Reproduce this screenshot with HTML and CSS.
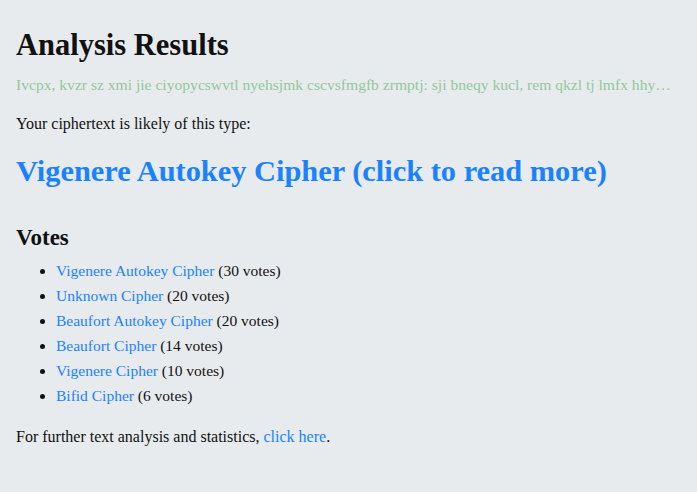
FILE: index.html
```html
<!DOCTYPE html>
<html>
<head>
<meta charset="utf-8">
<link rel="stylesheet" href="styles.css">
</head>
<body>
<main class="page">
  <h1 class="title">Analysis Results</h1>
  <p class="sample">Ivcpx, kvzr sz xmi jie ciyopycswvtl nyehsjmk cscvsfmgfb zrmptj: sji bneqy kucl, rem qkzl tj lmfx hhy…</p>
  <p class="text">Your ciphertext is likely of this type:</p>
  <h2 class="result"><a href="#">Vigenere Autokey Cipher (click to read more)</a></h2>
  <h3 class="votes-title">Votes</h3>
  <ul class="votes">
    <li><a href="#">Vigenere Autokey Cipher</a> (30 votes)</li>
    <li><a href="#">Unknown Cipher</a> (20 votes)</li>
    <li><a href="#">Beaufort Autokey Cipher</a> (20 votes)</li>
    <li><a href="#">Beaufort Cipher</a> (14 votes)</li>
    <li><a href="#">Vigenere Cipher</a> (10 votes)</li>
    <li><a href="#">Bifid Cipher</a> (6 votes)</li>
  </ul>
  <p class="text text-last">For further text analysis and statistics, <a href="#">click here</a>.</p>
</main>
</body>
</html>
```
FILE: styles.css
```css
html, body {
  margin: 0;
  padding: 0;
  background: #e8ebee;
}
body {
  font-family: "Liberation Serif", serif;
  color: #111;
  font-size: 16px;
}
.page {
  padding: 25px 16px 0 16px;
  display: flex;
  flex-direction: column;
}
a {
  color: #1a82ff;
  text-decoration: none;
}
.title {
  margin: 0;
  font-size: 30.5px;
  font-weight: bold;
  line-height: 40px;
}
.sample {
  margin: 8px 0 0 0;
  color: #93c79d;
  font-size: 15.6px;
  line-height: 24px;
  white-space: nowrap;
}
.text {
  margin: 15px 0 0 0;
  font-size: 16px;
  line-height: 24px;
}
.result {
  margin: 15px 0 0 0;
  font-size: 30.4px;
  line-height: 40px;
  font-weight: bold;
}
.votes-title {
  margin: 32px 0 0 0;
  font-size: 23px;
  line-height: 30px;
  font-weight: bold;
}
.votes {
  margin: 5px 0 0 0;
  padding-left: 40px;
  font-size: 15.5px;
  line-height: 25px;
}
.text-last {
  margin-top: 17px;
}
```
